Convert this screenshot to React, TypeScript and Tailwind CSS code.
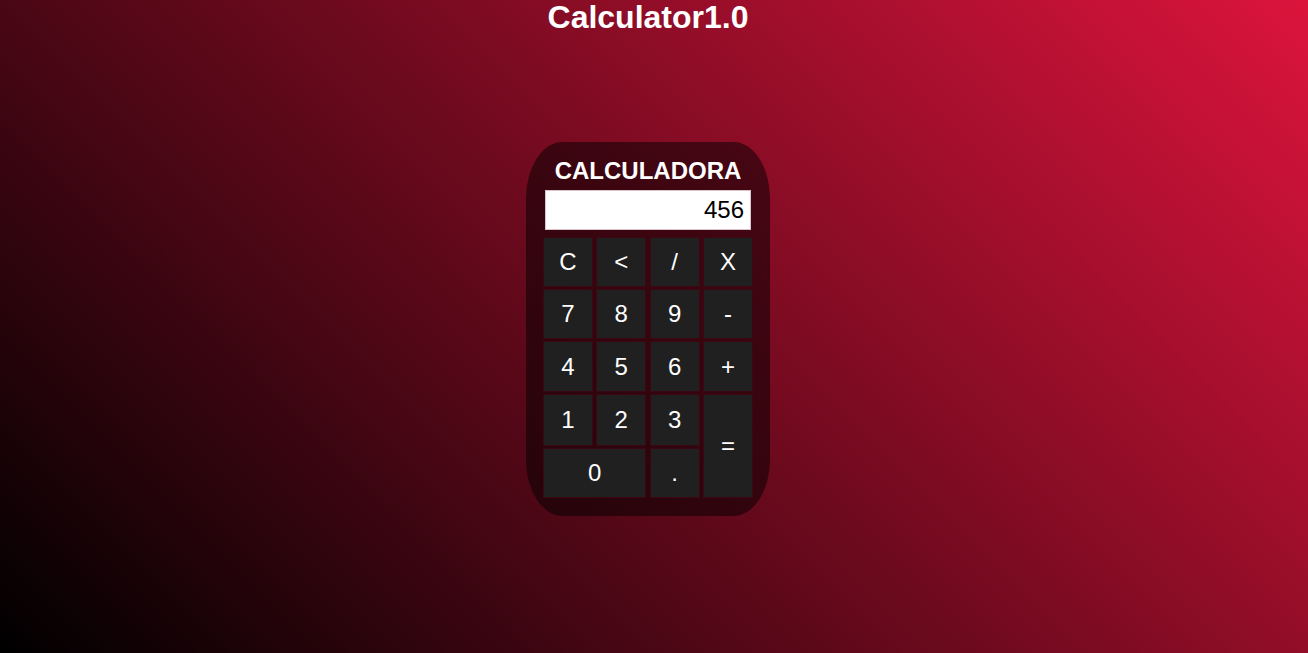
import React from "react";

const keys: { label: string; cls: string }[] = [
  { label: "C", cls: "" },
  { label: "<", cls: "" },
  { label: "/", cls: "" },
  { label: "X", cls: "" },
  { label: "7", cls: "" },
  { label: "8", cls: "" },
  { label: "9", cls: "" },
  { label: "-", cls: "" },
  { label: "4", cls: "" },
  { label: "5", cls: "" },
  { label: "6", cls: "" },
  { label: "+", cls: "" },
  { label: "1", cls: "" },
  { label: "2", cls: "" },
  { label: "3", cls: "" },
  { label: "=", cls: "row-span-2" },
  { label: "0", cls: "col-span-2" },
  { label: ".", cls: "" },
];

export default function App() {
  return (
    <div
      className="min-h-screen w-full bg-[linear-gradient(45deg,#000000,#dc143c)] pr-[12px] text-white"
      style={{ fontFamily: '"Liberation Sans", Arial, sans-serif' }}
    >
      <h1 className="m-0 text-center text-[32px] font-bold leading-[34px]">Calculator1.0</h1>
      <div className="mx-auto mt-[108px] flex h-[374px] w-[244px] flex-col rounded-[15%] bg-[rgba(0,0,0,0.5)] px-[17px] pt-[15px]">
        <h2 className="m-0 text-center text-[24px] font-bold leading-[28px]">CALCULADORA</h2>
        <div className="ml-[2px] mt-[5px] flex h-[40px] w-[206px] items-center justify-end border border-[#d9c4c9] bg-white pr-[6px] text-[24px] text-black">
          456
        </div>
        <div className="mt-[7px] grid grid-cols-[50px_50px_50px_50px] grid-rows-[50px_50px_51px_52px_50px] gap-x-[3.3px] gap-y-[2px]">
          {keys.map((k) => (
            <div
              key={k.label}
              className={`flex items-center justify-center border border-[#3a0712] bg-[#202020] text-[24px] text-white ${k.cls}`}
            >
              {k.label}
            </div>
          ))}
        </div>
      </div>
    </div>
  );
}
